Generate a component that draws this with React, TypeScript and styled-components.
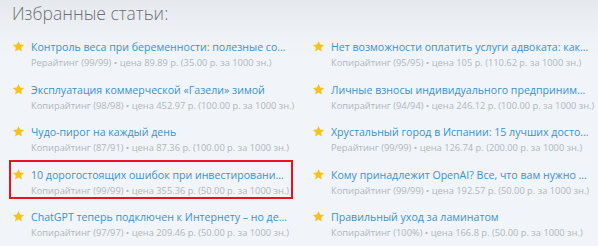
import styled, { createGlobalStyle } from "styled-components";

interface Article {
  title: string;
  meta: string;
  marked?: boolean;
}

const LEFT: Article[] = [
  {
    title: "Контроль веса при беременности: полезные советы для будущих мам",
    meta: "Рерайтинг (99/99) • цена 89.89 р. (35.00 р. за 1000 зн.)",
  },
  {
    title: "Эксплуатация коммерческой «Газели» зимой",
    meta: "Копирайтинг (98/98) • цена 452.97 р. (100.00 р. за 1000 зн.)",
  },
  {
    title: "Чудо-пирог на каждый день",
    meta: "Копирайтинг (87/91) • цена 87.36 р. (100.00 р. за 1000 зн.)",
  },
  {
    title: "10 дорогостоящих ошибок при инвестировании в недвижимость",
    meta: "Копирайтинг (99/99) • цена 355.36 р. (50.00 р. за 1000 зн.)",
    marked: true,
  },
  {
    title: "ChatGPT теперь подключен к Интернету – но действительно ли это так",
    meta: "Копирайтинг (97/97) • цена 209.46 р. (50.00 р. за 1000 зн.)",
  },
];

const RIGHT: Article[] = [
  {
    title: "Нет возможности оплатить услуги адвоката: как быть",
    meta: "Копирайтинг (95/95) • цена 105 р. (110.62 р. за 1000 зн.)",
  },
  {
    title: "Личные взносы индивидуального предпринимателя",
    meta: "Копирайтинг (94/94) • цена 246.12 р. (100.00 р. за 1000 зн.)",
  },
  {
    title: "Хрустальный город в Испании: 15 лучших достопримечательностей",
    meta: "Рерайтинг (99/99) • цена 126.74 р. (200.00 р. за 1000 зн.)",
  },
  {
    title: "Кому принадлежит OpenAI? Все, что вам нужно знать",
    meta: "Копирайтинг (99/99) • цена 192.57 р. (50.00 р. за 1000 зн.)",
  },
  {
    title: "Правильный уход за ламинатом",
    meta: "Копирайтинг (100%) • цена 166.8 р. (50.00 р. за 1000 зн.)",
  },
];

const GlobalStyle = createGlobalStyle`
  html, body {
    margin: 0;
    padding: 0;
  }
  body {
    width: 598px;
    height: 246px;
    overflow: hidden;
    font-family: "Open Sans", "Liberation Sans", sans-serif;
    background: linear-gradient(#e5e9ed 0px, #eef2f6 34px, #f1f5f9 60px);
  }
`;

function Star() {
  return (
    <StarIcon viewBox="0 0 24 24">
      <path
        d="M12 1.8l3.1 6.6 7.2.8-5.4 4.9 1.5 7.1L12 17.6l-6.4 3.6 1.5-7.1L1.7 9.2l7.2-.8z"
        fill="#f8c21c"
      />
    </StarIcon>
  );
}

function Item({ article }: { article: Article }) {
  return (
    <Row marked={article.marked ? "true" : "false"}>
      <Star />
      <Body>
        <Title>{article.title}</Title>
        <Meta>{article.meta}</Meta>
      </Body>
    </Row>
  );
}

export default function App() {
  return (
    <>
      <GlobalStyle />
      <Page>
        <Heading>Избранные статьи:</Heading>
        <Columns>
          <Column>
            {LEFT.map((a, i) => (
              <Item key={i} article={a} />
            ))}
          </Column>
          <Column>
            {RIGHT.map((a, i) => (
              <Item key={i} article={a} />
            ))}
          </Column>
        </Columns>
      </Page>
    </>
  );
}

interface IRow {
  marked: string;
}

const Page = styled.div`
  padding: 0 0 0 12px;
`;

const Heading = styled.h2`
  margin: 0;
  height: 32px;
  font-size: 17.5px;
  font-weight: 300;
  line-height: 27px;
  color: #6c7074;
`;

const Columns = styled.div`
  display: grid;
  grid-template-columns: 285px 285px;
  column-gap: 15px;
`;

const Column = styled.div`
  display: flex;
  flex-direction: column;
`;

const Row = styled.div<IRow>`
  display: flex;
  align-items: flex-start;
  gap: 6px;
  height: 39px;
  margin: 0 0 3.5px -3px;
  box-sizing: border-box;
  padding: 5px 0 0 1px;
  border: 2px solid
    ${(props) => (props.marked === "true" ? "#e8141c" : "transparent")};
  width: 284px;
`;

const StarIcon = styled.svg`
  flex: none;
  width: 13px;
  height: 13px;
  margin-top: 1px;
`;

const Body = styled.div`
  min-width: 0;
  flex: 1;
  padding-right: 2px;
`;

const Title = styled.div`
  font-size: 10.6px;
  line-height: 16px;
  color: #3892cf;
  white-space: nowrap;
  overflow: hidden;
  text-overflow: ellipsis;
`;

const Meta = styled.div`
  font-size: 9.3px;
  line-height: 15px;
  color: #afb5ba;
  white-space: nowrap;
`;
